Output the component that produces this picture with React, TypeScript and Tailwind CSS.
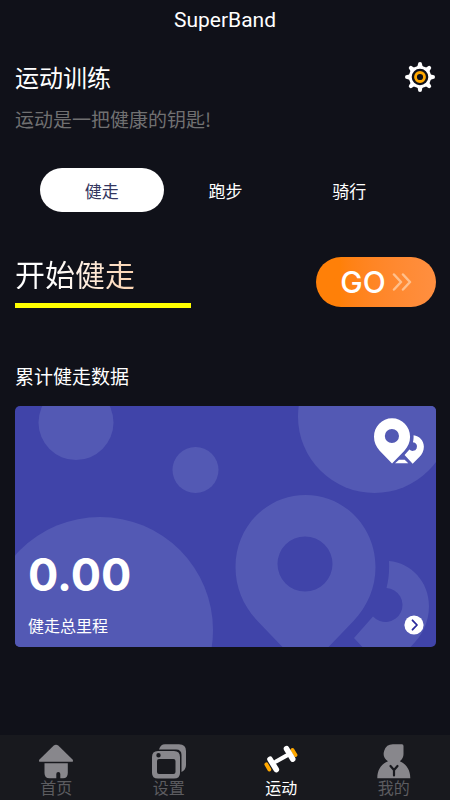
import clsx from "clsx";
import type { ReactNode } from "react";

type NavItem = {
  label: string;
  icon: ReactNode;
  active?: boolean;
};

const tabs = ["健走", "跑步", "骑行"];

function GearIcon() {
  return (
    <svg viewBox="0 0 32 32" className="size-8" aria-hidden="true">
      {[0, 45, 90, 135, 180, 225, 270, 315].map((angle) => (
        <path
          key={angle}
          d="M11.500 7.500 Q14 5.500 14 3 Q14 1 16 1 T18 3 Q18 5.500 20.500 7.500 Z"
          fill="#fff"
          transform={`rotate(${angle} 16 16)`}
        />
      ))}
      <circle cx="16" cy="16" r="9.700" fill="#101119" stroke="#fff" strokeWidth="2.800" />
      <circle cx="16" cy="16" r="4.500" fill="none" stroke="#ffa800" strokeWidth="2.800" />
    </svg>
  );
}

function PinShapes() {
  return (
    <>
      <path
        fillRule="evenodd"
        d="M0 72 C0 32 31 0 70 0 S140 32 140 72 C140 93 132 111 118 126 L70 176 L22 126 C8 111 0 93 0 72 Z M42 69 a27.5 27.5 0 1 0 55 0 a27.5 27.5 0 1 0 -55 0 Z"
      />
      <path d="M153.500 66 C176 68 193.500 87 193.500 111 C193.500 128 186 141 176 151 L150 177 L118.500 143 L137.500 121.500 A17 17 0 1 0 151 93 C153 85 154 77 153.500 66 Z" />
    </>
  );
}

function CardBackdrop() {
  return (
    <svg
      viewBox="0 0 421 241"
      preserveAspectRatio="xMidYMid slice"
      className="absolute inset-0 size-full"
      fill="#5359b4"
      aria-hidden="true"
    >
      <circle cx="61" cy="16.500" r="37.500" />
      <circle cx="180.500" cy="64" r="23" />
      <circle cx="359.500" cy="10.500" r="76.500" />
      <circle cx="85" cy="224" r="113" />
      <g transform="translate(220.5 89)">
        <PinShapes />
      </g>
    </svg>
  );
}

function PinsIcon() {
  return (
    <svg viewBox="0 0 194 177" className="h-[46px] w-[50px]" fill="#fff" aria-hidden="true">
      <PinShapes />
      <path d="M82 175 L97 161 H119 L133 175 Z" />
    </svg>
  );
}

function HomeIcon() {
  return (
    <svg viewBox="0 0 36 36" className="size-9" fill="currentColor" aria-hidden="true">
      <path d="M15.500 2.800 Q18 .8 20.500 2.800 L34.500 16.400 Q36 18.800 33.500 18.800 H2.500 Q0 18.800 1.500 16.400 Z" />
      <path d="M6.500 20.300 H29.800 V30 Q29.800 35.300 25 35.300 H22.300 V31 a2 2 0 0 0 -4 0 V35.300 H11.500 Q6.500 35.300 6.500 30 Z" />
    </svg>
  );
}

function SettingsIcon() {
  return (
    <svg viewBox="0 0 36 36" className="size-9" fill="currentColor" aria-hidden="true">
      <path d="M8 6.500 Q9.500 1.200 14 1.200 H28 Q35 1.200 35 8 V22 Q35 27 30.500 29 V12 Q30.500 6.500 25 6.500 Z" />
      <path
        fillRule="evenodd"
        d="M7 8 H23 Q29 8 29 14 V30 Q29 35.500 23 35.500 H7 Q1 35.500 1 30 V14 Q1 8 7 8 Z M8 16 Q6 16 6 18 V29 Q6 31 8 31 H22.500 Q24.500 31 24.500 29 V18 Q24.500 16 22.500 16 Z M5.300 12.200 a2.200 2.200 0 1 0 4.400 0 a2.200 2.200 0 1 0 -4.400 0 Z"
      />
    </svg>
  );
}

function DumbbellIcon() {
  return (
    <svg viewBox="0 0 36 36" className="size-9" fill="none" strokeLinecap="round" aria-hidden="true">
      <path d="M3.300 21.300 L6.300 26.500 M29.500 7 L32.500 12" stroke="#ffa800" strokeWidth="3.800" />
      <path d="M13 18.500 L23.500 12.700" stroke="#fff" strokeWidth="4.200" />
      <path d="M7 16.300 L13.300 26.500 M23.500 5.700 L29.700 16" stroke="#fff" strokeWidth="5.600" />
    </svg>
  );
}

function ProfileIcon() {
  return (
    <svg viewBox="0 0 36 36" className="size-9" fill="currentColor" aria-hidden="true">
      <path d="M17.500 1.200 H26 Q27.500 1.200 27.500 3 V10.500 A9.300 9.300 0 0 1 23.800 18.300 C30.500 21 34.300 27 34.300 35.300 H1.300 C1.300 27 5 21 12 18.300 A9.300 9.300 0 0 1 17.500 1.200 Z" />
      <path
        d="M14.500 23 L18 27 L21.500 23 M18 27 V32.500"
        fill="none"
        stroke="#18191e"
        strokeWidth="2.200"
        strokeLinecap="round"
      />
    </svg>
  );
}

const navItems: NavItem[] = [
  { label: "首页", icon: <HomeIcon /> },
  { label: "设置", icon: <SettingsIcon /> },
  { label: "运动", icon: <DumbbellIcon />, active: true },
  { label: "我的", icon: <ProfileIcon /> },
];

export default function App() {
  return (
    <div className="flex min-h-screen flex-col bg-[#101119] font-['Noto_Sans_CJK_SC',sans-serif] text-white">
      <header className="flex h-10 items-center justify-center">
        <h1 className="font-['Roboto',sans-serif] text-[21px] leading-8">SuperBand</h1>
      </header>

      <main className="flex flex-1 flex-col pr-3.5 pl-[15px]">
        <div className="mt-[19px] flex items-center justify-between">
          <h2 className="text-2xl leading-9">运动训练</h2>
          <button type="button" aria-label="运动设置">
            <GearIcon />
          </button>
        </div>
        <p className="mt-2.5 text-[19px] leading-7 text-[#707071]">运动是一把健康的钥匙!</p>

        <div className="mt-[35px] grid grid-cols-3 px-[25px]">
          {tabs.map((tab, index) => (
            <button
              key={tab}
              type="button"
              aria-pressed={index === 0}
              className={clsx(
                "h-11 rounded-full pt-0.5 text-[17px] leading-6",
                index === 0 ? "bg-white text-[#33365f]" : "text-white",
              )}
            >
              {tab}
            </button>
          ))}
        </div>

        <div className="mt-[45px] flex items-start justify-between">
          <div className="w-44 border-b-5 border-[#ffff00] pb-3.5">
            <span className="block w-fit bg-linear-to-r from-white from-30% to-[#fbd3b0] bg-clip-text text-[30px] leading-8 text-transparent">
              开始健走
            </span>
          </div>
          <button
            type="button"
            className="flex h-[50px] w-[120px] items-center justify-center gap-1.5 rounded-full bg-linear-to-r from-[#ff8008] from-20% to-[#ff8f40]"
          >
            <span className="font-['Inter',sans-serif] text-[30px] leading-10 font-medium">GO</span>
            <svg viewBox="0 0 20 18" className="h-[18px] w-5" fill="none" aria-hidden="true">
              <path
                d="M2 1.500 L9 9 L2 16.500 M11 1.500 L18 9 L11 16.500"
                stroke="#ffc08c"
                strokeWidth="2.500"
                strokeLinecap="round"
                strokeLinejoin="round"
              />
            </svg>
          </button>
        </div>

        <h3 className="mt-[54px] text-[19px] leading-7">累计健走数据</h3>

        <section className="relative mt-4 flex h-[241px] flex-col justify-between overflow-hidden rounded-[5px] bg-[#4044a9]">
          <CardBackdrop />
          <div className="relative flex justify-end pt-3 pr-3">
            <PinsIcon />
          </div>
          <div className="relative pr-3 pb-2 pl-[13px]">
            <p className="font-['Inter',sans-serif] text-[45px] leading-14 font-bold">0.00</p>
            <div className="mt-2 flex items-center justify-between">
              <span className="text-base leading-7">健走总里程</span>
              <button type="button" aria-label="查看详情">
                <svg viewBox="0 0 20 20" className="size-5" fill="none" aria-hidden="true">
                  <circle cx="10" cy="10" r="9.600" fill="#fff" />
                  <path
                    d="M8.500 5.300 L13 10 L8.500 14.700"
                    stroke="#2b2a9c"
                    strokeWidth="1.800"
                    strokeLinecap="round"
                    strokeLinejoin="round"
                  />
                </svg>
              </button>
            </div>
          </div>
        </section>
      </main>

      <nav className="grid h-[65px] grid-cols-4 bg-[#18191e] pt-2">
        {navItems.map((item) => (
          <a
            key={item.label}
            href="#"
            aria-current={item.active ? "page" : undefined}
            className="flex flex-col items-center text-[#88878c]"
          >
            {item.icon}
            <span
              className={clsx("text-base leading-4", item.active ? "text-white" : "text-[#5c5c60]")}
            >
              {item.label}
            </span>
          </a>
        ))}
      </nav>
    </div>
  );
}
